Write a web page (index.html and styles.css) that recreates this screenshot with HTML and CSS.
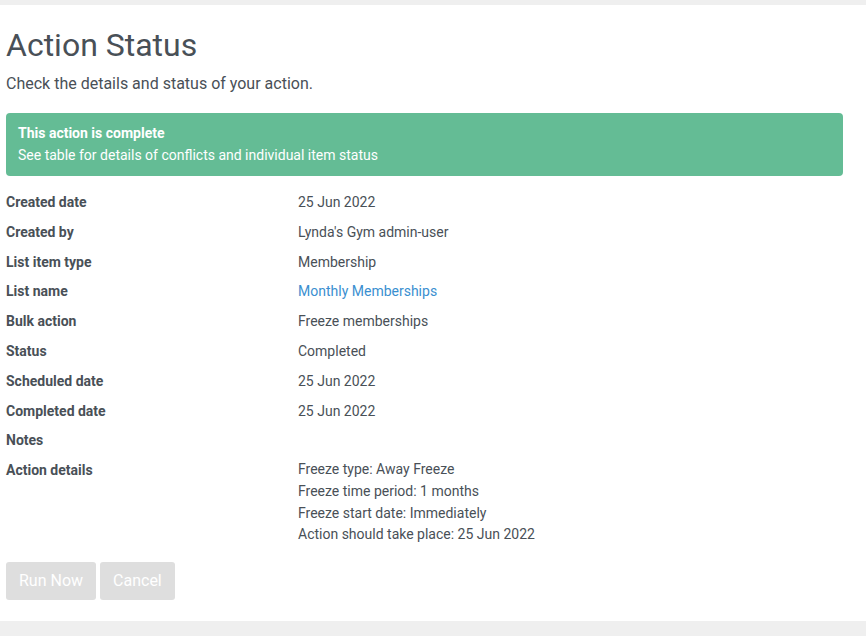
FILE: index.html
```
<!DOCTYPE html>
<html>
<head>
<meta charset="utf-8">
<link rel="stylesheet" href="styles.css">
</head>
<body>
<div class="page">
  <h1 class="title">Action Status</h1>
  <p class="subtitle">Check the details and status of your action.</p>
  <div class="alert">
    <div class="alert-title">This action is complete</div>
    <div class="alert-text">See table for details of conflicts and individual item status</div>
  </div>
  <div class="details">
    <div class="label">Created date</div><div class="value">25 Jun 2022</div>
    <div class="label">Created by</div><div class="value">Lynda's Gym admin-user</div>
    <div class="label">List item type</div><div class="value">Membership</div>
    <div class="label">List name</div><div class="value"><a class="link" href="#">Monthly Memberships</a></div>
    <div class="label">Bulk action</div><div class="value">Freeze memberships</div>
    <div class="label">Status</div><div class="value">Completed</div>
    <div class="label">Scheduled date</div><div class="value">25 Jun 2022</div>
    <div class="label">Completed date</div><div class="value">25 Jun 2022</div>
    <div class="label">Notes</div><div class="value"></div>
    <div class="label">Action details</div>
    <div class="value multi">
      <div>Freeze type: Away Freeze</div>
      <div>Freeze time period: 1 months</div>
      <div>Freeze start date: Immediately</div>
      <div>Action should take place: 25 Jun 2022</div>
    </div>
  </div>
  <div class="actions">
    <button class="btn">Run Now</button>
    <button class="btn">Cancel</button>
  </div>
</div>
</body>
</html>
```
FILE: styles.css
```
html, body {
  margin: 0;
  padding: 0;
}
body {
  background: #efefef;
  font-family: Roboto, "Liberation Sans", sans-serif;
  color: #495057;
  padding: 5px 0 15px;
}
.page {
  background: #fff;
  height: 616px;
  box-sizing: border-box;
  padding: 0 23px 0 6px;
}
.title {
  margin: 0;
  padding-top: 21px;
  font-size: 32px;
  font-weight: 400;
  line-height: 38px;
  color: #495057;
}
.subtitle {
  margin: 10px 0 0;
  font-size: 16px;
  line-height: 20px;
}
.alert {
  margin-top: 19px;
  background: #64bc95;
  border-radius: 4px;
  color: #fff;
  padding: 9px 12px 10px 12px;
  font-size: 14px;
  line-height: 22px;
}
.alert-title {
  font-weight: 700;
}
.details {
  display: grid;
  grid-template-columns: 292px 1fr;
  margin-top: 15px;
  font-size: 14px;
  line-height: 22px;
  row-gap: 7.8px;
}
.label {
  font-weight: 700;
}
.value.multi {
  line-height: 21.7px;
}
.link {
  color: #3a8fd0;
  text-decoration: none;
}
.actions {
  display: flex;
  gap: 4px;
  margin-top: 16px;
}
.btn {
  background: #dedede;
  border: none;
  border-radius: 3px;
  color: #fff;
  font-family: Roboto, "Liberation Sans", sans-serif;
  font-size: 16px;
  height: 38px;
  padding: 0 13px;
}
```
